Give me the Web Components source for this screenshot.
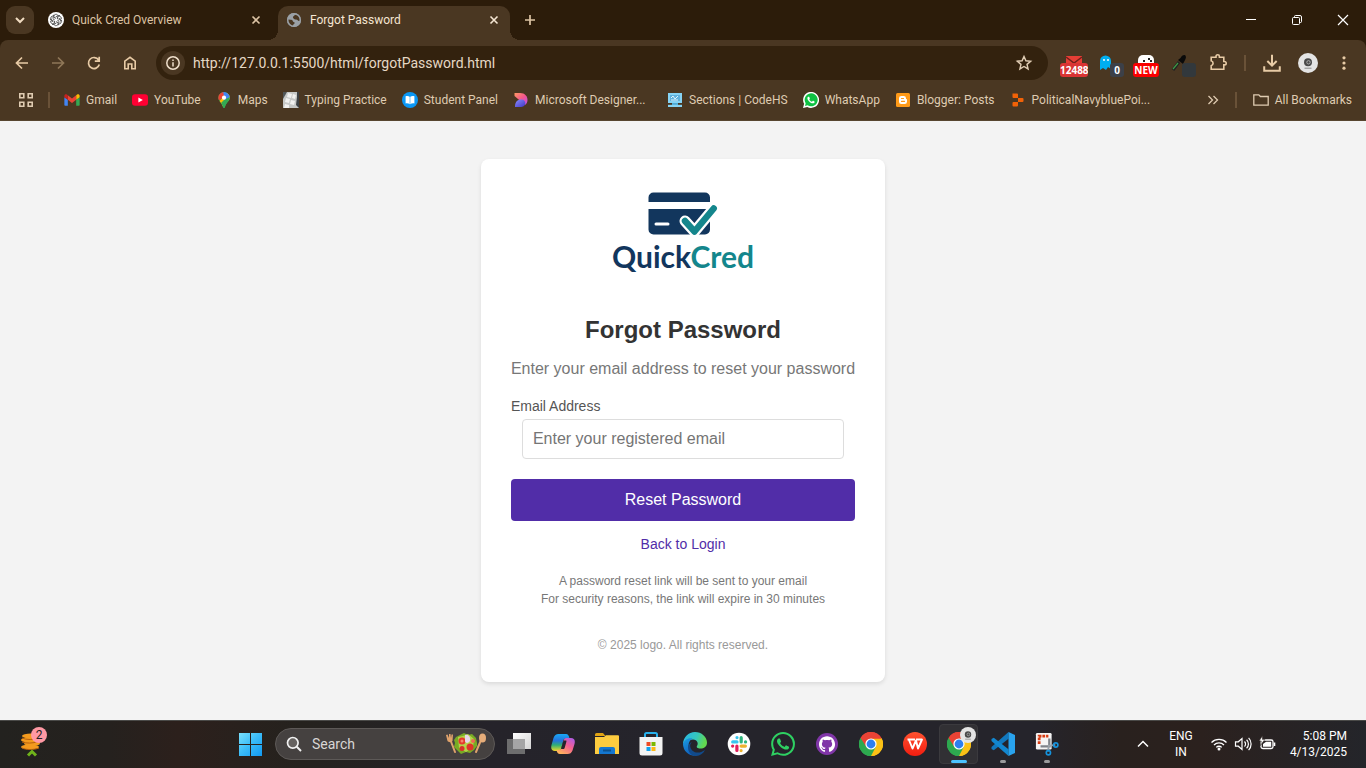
<!DOCTYPE html>
<html lang="en">
<head>
<meta charset="utf-8">
<title>Forgot Password</title>
<style>
html, body { margin: 0; height: 100%; }
body { font-family: Roboto, "Open Sans", sans-serif; font-size: 12px; }
</style>
</head>
<body>
<desktop-screen></desktop-screen>
<script>
const WHATSAPP = "M17.472 14.382c-.297-.149-1.758-.867-2.03-.967-.273-.099-.471-.148-.67.15-.197.297-.767.966-.94 1.164-.173.199-.347.223-.644.075-.297-.15-1.255-.463-2.39-1.475-.883-.788-1.48-1.761-1.653-2.059-.173-.297-.018-.458.13-.606.134-.133.298-.347.446-.52.149-.174.198-.298.298-.497.099-.198.05-.371-.025-.52-.075-.149-.669-1.612-.916-2.207-.242-.579-.487-.5-.669-.51-.173-.008-.371-.01-.57-.01-.198 0-.52.074-.792.372-.272.297-1.04 1.016-1.04 2.479 0 1.462 1.065 2.875 1.213 3.074.149.198 2.096 3.2 5.077 4.487.709.306 1.262.489 1.694.625.712.227 1.36.195 1.871.118.571-.085 1.758-.719 2.006-1.413.248-.694.248-1.289.173-1.413-.074-.124-.272-.198-.57-.347m-5.421 7.403h-.004a9.87 9.87 0 01-5.031-1.378l-.361-.214-3.741.982.998-3.648-.235-.374a9.86 9.86 0 01-1.51-5.26c.001-5.45 4.436-9.884 9.888-9.884 2.64 0 5.122 1.03 6.988 2.898a9.825 9.825 0 012.893 6.994c-.003 5.45-4.437 9.884-9.885 9.884m8.413-18.297A11.815 11.815 0 0012.05 0C5.495 0 .16 5.335.157 11.892c0 2.096.547 4.142 1.588 5.945L.057 24l6.305-1.654a11.882 11.882 0 005.683 1.448h.005c6.554 0 11.89-5.335 11.893-11.893a11.821 11.821 0 00-3.48-8.413Z";
const OCTOCAT = "M12 .297c-6.63 0-12 5.373-12 12 0 5.303 3.438 9.8 8.205 11.385.6.113.82-.258.82-.577 0-.285-.01-1.04-.015-2.04-3.338.724-4.042-1.61-4.042-1.61C4.422 18.07 3.633 17.7 3.633 17.7c-1.087-.744.084-.729.084-.729 1.205.084 1.838 1.236 1.838 1.236 1.07 1.835 2.809 1.305 3.495.998.108-.776.417-1.305.76-1.605-2.665-.3-5.466-1.332-5.466-5.93 0-1.31.465-2.38 1.235-3.22-.135-.303-.54-1.523.105-3.176 0 0 1.005-.322 3.3 1.23.96-.267 1.98-.399 3-.405 1.02.006 2.04.138 3 .405 2.28-1.552 3.285-1.23 3.285-1.23.645 1.653.24 2.873.12 3.176.765.84 1.23 1.91 1.23 3.22 0 4.61-2.805 5.625-5.475 5.92.42.36.81 1.096.81 2.22 0 1.606-.015 2.896-.015 3.286 0 .315.21.69.825.57C20.565 22.092 24 17.592 24 12.297c0-6.627-5.373-12-12-12";
const CHROME = `<path d="M12 12 1.6 6A12 12 0 0 1 22.4 6z" fill="#ea4335"/><path d="M12 12 22.4 6A12 12 0 0 1 12 24z" fill="#fbc116"/><path d="M12 12 12 24A12 12 0 0 1 1.6 6z" fill="#34a853"/><path d="M12 6.5H22.7A12 12 0 0 1 12 24L16.8 14.7z" fill="#fbc116"/><path d="M1.6 6A12 12 0 0 0 12 24L16.8 14.7 12 17.5 7.2 14.8z" fill="#2da94f"/><path d="M1.6 6A12 12 0 0 1 22.6 6.5H12L7.2 14.8z" fill="#ea4335"/><circle cx="12" cy="12" r="5.6" fill="#fff"/><circle cx="12" cy="12" r="4.4" fill="#2d7ff0"/>`;
const line = (d, w = 1.6) => `<path d="${d}" fill="none" stroke="currentColor" stroke-width="${w}"/>`;
const ROSETTE = Array.from({ length: 6 }, (_, i) => `<path d="M8 6.400L5.900 5.200V4.400a2.200 2.200 0 0 1 3.800-1.400M7.600 4.900l2.300-1.300a2.300 2.300 0 0 1 2 .1" transform="rotate(${i * 60} 8 8)" fill="none" stroke="#333" stroke-width=".8"/>`).join("");

/* name: [viewBox, markup] */
const ICONS = {
  chevron: ["0 0 16 16", line("M4 6l4 4 4-4", 2)],
  up: ["0 0 16 16", line("M3 10.500l5-5 5 5", 1.5)],
  close: ["0 0 16 16", line("M4.500 4.500l7 7M11.500 4.500l-7 7", 1.6)],
  plus: ["0 0 16 16", line("M8 3v10M3 8h10", 1.7)],
  minimize: ["0 0 16 16", line("M3 7.500h10", 1)],
  restore: ["0 0 16 16", `<rect x="3.500" y="5.500" width="7" height="7" rx="1" fill="none" stroke="currentColor"/><path d="M5.500 5.200V4.500a1 1 0 0 1 1-1h4.500a1.500 1.500 0 0 1 1.500 1.500v4.500a1 1 0 0 1-1 1h-.700" fill="none" stroke="currentColor"/>`],
  quit: ["0 0 16 16", line("M3 3l10 10M13 3L3 13", 1.2)],
  openai: ["0 0 16 16", `<circle cx="8" cy="8" r="8" fill="#fff"/>${ROSETTE}`],
  globe: ["0 0 16 16", `<circle cx="8" cy="8" r="7" fill="#9aa0a6"/><path d="M1.500 7.500c2 .2 3.500 0 4.500.5 1 .6.500 1.500 1.500 2 1 .2 1.500.5 1 1.500-.8.600-1.500 1-1.500 2.500C4 14 1.500 11 1.500 7.500zM7 4.500c1-.3 1.500-.5 1.500-1.500l2-.8A6.500 6.500 0 0 1 14.500 8c-.5 1-1.500 1-2.500.8-.5-1-1.500-1-2.500-1.200C8 7.500 6.500 6 7 4.500z" fill="#4a3722"/><circle cx="8" cy="8" r="6.300" fill="none" stroke="#9aa0a6" stroke-width="1.500"/>`],
  back: ["0 0 16 16", line("M14 8H3M8 2.500L2.500 8 8 13.500", 1.7)],
  forward: ["0 0 16 16", line("M2 8h11M8 2.500L13.500 8 8 13.500", 1.7)],
  reload: ["0 0 16 16", line("M13.300 9.500A5.500 5.500 0 1 1 12.600 5M13.200 1.800v4.400H8.800", 1.7)],
  home: ["0 0 16 16", line("M2.800 13.700V6.200L8 2.300l5.200 3.900v7.500H9.800V9H6.200v4.700z", 1.6)],
  info: ["0 0 16 16", `<circle cx="8" cy="8" r="6.200" fill="none" stroke="currentColor" stroke-width="1.500"/>${line("M8 7.200V11.500M8 4.500V6", 1.5)}`],
  star: ["0 0 16 16", line("M8 2.200l1.700 3.800 4.200.4-3.200 2.800.9 4.100L8 11.100l-3.600 2.200.9-4.100-3.200-2.800 4.200-.4z", 1.3)],
  mail: ["0 0 28 24", `<path d="M6 3h16v9H6z" fill="#e53e35"/><path d="M6 4l8 6 8-6" stroke="#6d211b" stroke-width="1.500" fill="none"/>`],
  ghost: ["0 0 28 24", `<path d="M4 17V8a5.500 5.500 0 0 1 11 0v8l-3-2-2 3-3-2z" fill="#00aef0"/><circle cx="8" cy="7" r="1" fill="#fff"/><circle cx="12" cy="7" r="1" fill="#fff"/>`],
  dice: ["0 0 28 24", `<rect x="6" y="2" width="16" height="16" rx="5" fill="#fff"/><path d="M11 7h2v2h-2zM16 5h2v2h-2zM18 7h2v2h-2z" fill="#222"/>`],
  dropper: ["0 0 28 24", `<path d="M5 17L11 9" stroke="#222" stroke-width="3"/><path d="M5 16l5-6" stroke="#3f9b46" stroke-width="1.200"/><path d="M10 7l5 4 1.500-3 1-2c1-2 0-4-1-4-2 0-3 1-4 3z" fill="#0a0a0a"/>`],
  puzzle: ["0 0 20 20", line("M3.200 4.200H8V3.500a1.700 1.700 0 0 1 3.400 0v.7h4.400V8.500h.7a1.700 1.700 0 0 1 0 3.400h-.7v4.300H3.200V12.800a2.600 2.600 0 0 0 0-5z", 1.6)],
  download: ["0 0 18 18", line("M9 1.500v9.500M4.800 7.200L9 11.400l4.200-4.200M2 12v4h14v-4", 1.8)],
  person: ["0 0 20 20", `<circle cx="10" cy="10" r="10" fill="#e4e4e4"/><circle cx="10" cy="9.300" r="4" fill="#494949"/><circle cx="10.500" cy="9.300" r="1.700" fill="none" stroke="#aaa"/><path d="M6.500 15.200h7" stroke="#888"/>`],
  menu: ["0 0 16 16", `<g fill="currentColor"><circle cx="8" cy="2.800" r="1.600"/><circle cx="8" cy="8" r="1.600"/><circle cx="8" cy="13.200" r="1.600"/></g>`],
  apps: ["0 0 16 16", `<g fill="none" stroke="currentColor" stroke-width="1.600"><path d="M1.800 1.800h4v4h-4zM10.200 1.800h4v4h-4zM1.800 10.200h4v4h-4zM10.200 10.200h4v4h-4z"/></g>`],
  gmail: ["50 37 92 76", `<path fill="#4285f4" d="M58 108h14V74L52 59v43c0 3.320 2.690 6 6 6"/><path fill="#34a853" d="M120 108h14c3.320 0 6-2.690 6-6V59l-20 15"/><path fill="#fbbc04" d="M120 48v26l20-15v-8c0-7.420-8.470-11.650-14.400-7.200"/><path fill="#ea4335" d="M72 74V48l24 18 24-18v26L96 92"/><path fill="#c5221f" d="M52 51v8l20 15V48l-5.600-4.200c-5.940-4.450-14.400-.220-14.400 7.200"/>`],
  youtube: ["0 0 16 16", `<rect y="2.300" width="16" height="11.400" rx="3" fill="#ff0033"/><path d="M6.400 5.500v5L10.800 8z" fill="#fff"/>`],
  maps: ["0 0 16 16", `<clipPath id="p"><path d="M8 0a5.700 5.700 0 0 1 5.700 5.700c0 3.500-3.700 4.700-4.700 9.300-.2 1.300-1.800 1.300-2 0C6 10.400 2.300 9.200 2.300 5.700A5.700 5.700 0 0 1 8 0z"/></clipPath><g clip-path="url(#p)"><path d="M0 0h16v16H0z" fill="#34a853"/><path d="M0 13L14 -3 16 5 5 16z" fill="#fbbc04"/><path d="M8 8L16 0v16H4l0-4z" fill="#34a853"/><path d="M6-1L16 -1V4L8 8z" fill="#4285f4"/><path d="M0-2h7L8 5 2 9z" fill="#ea4335"/></g><circle cx="8" cy="5.700" r="2.100" fill="#fff"/>`],
  keys: ["0 0 16 16", `<path d="M0 0h16v16H0z" fill="#c6c8c7"/><path d="M14 0h2v16l-3-3 1-8z" fill="#3d4144"/><g fill="#f1f1f0"><path d="M5 1l4 1-1 4-4-1zM10 2l3 1-1 4-3-1zM3 6l4 1-1 4-4-1zM8 8l4 1-1 4-4-1zM2 12l4 1v3H1z"/></g><path d="M0 0h4L0 7z" fill="#505557"/>`],
  book: ["0 0 16 16", `<circle cx="8" cy="8" r="8" fill="#0a97f5"/><path d="M3.600 4.300c1.500-.5 3-.3 4.400.6 1.400-.9 2.900-1.100 4.400-.6v7.200c-1.500-.3-3-.1-4.400.8-1.400-.9-2.900-1.100-4.400-.8z" fill="#fff"/><path d="M8 5v7" stroke="#78c5f8"/>`],
  designer: ["0 0 16 16", `<linearGradient id="a" x2="1" y2="1"><stop stop-color="#ff9a62"/><stop offset=".5" stop-color="#f4568b"/><stop offset="1" stop-color="#b74df0"/></linearGradient><linearGradient id="b" x2="1" y2="1"><stop stop-color="#8b8cff"/><stop offset="1" stop-color="#3f36c4"/></linearGradient><path d="M1.500 1H7c5 0 7.500 3.500 7.500 7 0 2-1 4-2.500 5L1.500 4z" fill="url(#a)"/><path d="M2 14.500C2 10 4.500 7.500 8 7.500c3 0 5 2 4 5-.5 1.500-2 2.500-4 2.500H2z" fill="url(#b)"/>`],
  computer: ["0 0 16 16", `<path d="M1 1h14v10H1z" fill="#86d3f4"/><path d="M3 3h10v6H3z" fill="#5fb0dc"/><path d="M4 6l2-2 2 3 3-3M4 8h7" stroke="#dff4fd" fill="none"/><path d="M5 11h6v2H5z" fill="#4caad8"/><path d="M1 12.800h14V15H1z" fill="#86d3f4"/>`],
  whatsapp: ["0 0 24 24", `<path d="${WHATSAPP}" fill="#2ed162"/>`],
  whatsappFull: ["0 0 24 24", `<path d="M0 24l1.700-6.200A12 12 0 1 1 6.400 22.400z" fill="#fff"/><path d="M3 21l1-4A9.800 9.800 0 1 1 7 20z" fill="#0fc143"/><g transform="translate(12 12) scale(.9) translate(-12 -12)"><path d="${WHATSAPP.split("m-5.421")[0]}" fill="#fff"/></g>`],
  blogger: ["0 0 16 16", `<rect x="1" y="1" width="14" height="14" rx="1.500" fill="#ff9a18"/><path d="M6.300 4h2.400A2.300 2.300 0 0 1 11 6.300c0 .8.300.9 1 1v2.400a2.300 2.300 0 0 1-2.300 2.300H6.300A2.300 2.300 0 0 1 4 9.700V6.300A2.300 2.300 0 0 1 6.300 4z" fill="#fff"/><path d="M6.500 6.500H8.500M6.500 9.400h3" stroke="#ff9a18" stroke-width="1.200" stroke-linecap="round"/>`],
  replit: ["0 0 16 16", `<path d="M2.500 1.500H7a1 1 0 0 1 1 1V6H3.500a1 1 0 0 1-1-1zM8 6h4.500a1 1 0 0 1 1 1V9a1 1 0 0 1-1 1H8zM3.500 10H8v3.500a1 1 0 0 1-1 1H3.500a1 1 0 0 1-1-1V11a1 1 0 0 1 1-1z" fill="#f26207"/>`],
  more: ["0 0 12 12", line("M1.500 2l4 4-4 4M6.500 2l4 4-4 4", 1.3)],
  folder: ["0 0 16 16", line("M.8 2.800h5l1.600 1.700h7.800v8.700H.8z", 1.3)],
  coins: ["0 0 28 28", `<g fill="#f39a1e"><ellipse cx="12" cy="7" rx="9" ry="2.500"/><ellipse cx="10" cy="11" rx="8" ry="2.500"/><ellipse cx="13" cy="14.500" rx="8" ry="2.500"/><ellipse cx="11" cy="18" rx="9" ry="2.500"/></g><path d="M3 9c4 2 12 2 17 0M3 13c4 1.500 11 1.500 16-.500M3 19c4 2 12 2 17 0" stroke="#b7600d" fill="none"/><path d="M9 26.500L13 22.500l4 4" fill="none" stroke="#6fb31b" stroke-width="3"/>`],
  windows: ["0 0 24 24", `<linearGradient id="w" gradientUnits="userSpaceOnUse" x1="0" y1="0" x2="24" y2="24"><stop stop-color="#7fe3fc"/><stop offset=".5" stop-color="#3bbcf8"/><stop offset="1" stop-color="#1199f2"/></linearGradient><path d="M1 1h11v11H1zM13 1h11v11H13zM1 13h11v11H1zM13 13h11v11H13z" fill="url(#w)"/>`],
  search: ["0 0 16 16", `<circle cx="6.800" cy="6.800" r="5.300" fill="#65615f" stroke="#f1f1f1" stroke-width="1.700"/><path d="M10.800 10.800L15 15" stroke="#f1f1f1" stroke-width="2"/>`],
  salad: ["0 0 40 22", `<g stroke="#e0a36c" stroke-width="2" stroke-linecap="round" fill="none"><path d="M4 6L9 19M35.500 6L30 19"/></g><path d="M0 2l1.500 6c1 1.500 4 1.500 5 0L7 1.500l-1.500 0L5 5 4.500 1H3v4L1.500 1.500z" fill="#e0a36c"/><ellipse cx="36.500" cy="5" rx="3.500" ry="4.500" fill="#e6ad79"/><path d="M10 4l4-2 4-2 4 2 4-1 4 4 1 5 0 3-3 4-4 3-4-1-5 2-4-4-3-3 1-4-1-3z" fill="#78ab24"/><path d="M12 4l5-1 5-2 6 5-1 8-7 5-7-4z" fill="#b4d34a"/><circle cx="16" cy="8" r="3.500" fill="#e43a2d"/><circle cx="16" cy="8" r="1.500" fill="#f5866c"/><circle cx="24" cy="14" r="3.500" fill="#df3529"/><circle cx="27" cy="8" r="2" fill="#f06a50"/><circle cx="16" cy="15.500" r="2.500" fill="#d9302a"/><path d="M19 2c3-1 6 2 5 6-2 3-5 2-5 0z" fill="#e7d6e9"/>`],
  taskview: ["0 0 24 24", `<linearGradient id="t" x2="1" y2="1"><stop stop-color="#fff"/><stop offset="1" stop-color="#d4d4d4"/></linearGradient><path d="M6 1h18v16H6z" fill="url(#t)"/><path d="M0 7h18v15H0z" fill="#6d6d6e"/><path d="M6 7h12v10H6z" fill="#a5a5a6"/>`],
  copilot: ["0 0 24 24", `<linearGradient id="c" x2="0" y2="1"><stop stop-color="#18a8f5"/><stop offset=".4" stop-color="#2672dc"/><stop offset=".65" stop-color="#2fae75"/><stop offset="1" stop-color="#f2d928"/></linearGradient><linearGradient id="d" x1="1" y1="0" x2=".3" y2="1"><stop stop-color="#a35bf0"/><stop offset=".5" stop-color="#f45f91"/><stop offset="1" stop-color="#ffb25c"/></linearGradient><path d="M7.500 2H15c2 0 3 1.500 3.500 4.500H15c-2 0-2.500 1-3 3l-1.500 6c-.6 2.500-1.500 3.500-4 3.500H4c-3 0-4.500-2-3.500-6l2-7C3.500 3.500 5 2 7.500 2z" fill="url(#c)"/><path d="M16.500 22H9c-2 0-3-1.500-3.500-4h2c2 0 3-1 3.500-3l1.500-6c.6-2.500 1.500-3 4-3H20c3 0 4.500 2 3.500 6l-2 6.500c-1 2.500-2.500 3.500-5 3.500z" fill="url(#d)"/><path d="M12.500 8.500h2.200c1 0 .8.700.6 1.500l-1.500 5.500c-.3 1-.8 1.500-1.800 1.500H10z" fill="#25242b"/>`],
  explorer: ["0 0 24 24", `<path d="M0 2.500A1.500 1.500 0 0 1 1.500 1H8l2.500 3H0z" fill="#e0a313"/><path d="M0 5h9l2-1.800h12a1 1 0 0 1 1 1V22H0z" fill="#fdcc3f"/><path d="M4 22v-5a2 2 0 0 1 2-2h12a2 2 0 0 1 2 2v5z" fill="#1477d1"/><path d="M8 18.500h8" stroke="#0c5290" stroke-width="2"/>`],
  store: ["0 0 24 24", `<path d="M6 6V2.500A1.500 1.500 0 0 1 7.500 1h9A1.500 1.500 0 0 1 18 2.500V6" stroke="#28b1ec" stroke-width="2" fill="none"/><path d="M.5 5h23v16a2.500 2.500 0 0 1-2.500 2.500H3A2.500 2.500 0 0 1 .5 21z" fill="#f3f3f3"/><path d="M7.500 10h4v4h-4z" fill="#ee4b24"/><path d="M12.500 10h4v4h-4z" fill="#7bb800"/><path d="M7.500 15h4v4h-4z" fill="#10a1ed"/><path d="M12.500 15h4v4h-4z" fill="#fdb813"/>`],
  edge: ["0 0 24 24", `<linearGradient id="e" x2="1" y2=".3"><stop stop-color="#27b5e9"/><stop offset=".6" stop-color="#35c7bc"/><stop offset="1" stop-color="#62d84f"/></linearGradient><linearGradient id="f" x2=".4" y2="1"><stop stop-color="#1b9ce2"/><stop offset="1" stop-color="#1060bc"/></linearGradient><path d="M0 12C.2 5 5.500 0 12 0s12 5 12 10.500c0 4-3 6-6.500 6-3 0-4.500-1.500-3.500-2.600 1.700-2 .5-6.400-4-6.400-5 0-8.500 3-10 4.500z" fill="url(#e)"/><path d="M0 12c1-4 5-6.500 9.500-5.500C7 8 5.500 10.500 5.500 14c0 4.500 3.200 8.500 7 9.900A12 12 0 0 1 0 12z" fill="url(#f)"/><path d="M9 10c-2.500 2-2.500 6 .5 8.700 3.500 2.800 8 2.300 12.500-.7-2 4-6 6.300-10 6-5-1-8-6-6.500-10C6 12 7.500 10.500 9 10z" fill="#114a8b"/>`],
  slack: ["0 0 24 24", `<circle cx="12" cy="12" r="11.300" fill="#fff"/><g stroke-width="3.200" stroke-linecap="round"><path d="M5.700 9.900H10M10 5.500v.1" stroke="#36c5f0"/><path d="M14.200 5.700V9.900M18.500 9.900h.1" stroke="#2eb67d"/><path d="M14.100 14.100h4.300M14.100 18.500v.1" stroke="#ecb22e"/><path d="M9.900 14.100v4.300M5.600 14.100h.1" stroke="#e01e5a"/></g>`],
  github: ["0 0 24 24", `<circle cx="12" cy="12" r="11" fill="#8036a8"/><g transform="translate(4 4) scale(.67)"><path d="${OCTOCAT}" fill="#fff"/></g>`],
  chrome: ["0 0 24 24", CHROME],
  wps: ["0 0 24 24", `<linearGradient id="g" x2="0" y2="1"><stop stop-color="#ff5230"/><stop offset="1" stop-color="#f31d10"/></linearGradient><circle cx="12" cy="12" r="12" fill="url(#g)"/><path d="M4.500 7.500h7.500M6 8l3.500 8.500L13 8.500l2 8L19 7.500h-6" fill="none" stroke="#fff" stroke-width="1.900" stroke-linejoin="round"/>`],
  vscode: ["0 0 24 24", `<path d="M17.500 0v6.800L2.800 18.200.5 17V15z" fill="#1178be"/><path d="M17.500 24v-6.800L2.800 5.800.5 7V9z" fill="#1287d0"/><path d="M17.500 0L24 3v18l-6.500 3z" fill="#29a3ee"/>`],
  snip: ["0 0 26 26", `<rect x="1" y="1" width="17" height="18" rx="1.500" fill="#f5f5f5"/><path d="M4.500 13V4.500h10" fill="none" stroke="#d83b12" stroke-width="3" stroke-dasharray="3 1"/><path d="M15.500 7v9.500M6 15.500h11" stroke="#80848a" stroke-width="2.500"/><path d="M14 15l8-1M15 15l-1 6" stroke="#9aa1a8" stroke-width="2"/><circle cx="22.500" cy="14" r="2.300" fill="none" stroke="#1592dc" stroke-width="1.800"/><circle cx="14.500" cy="22.500" r="2.300" fill="none" stroke="#1592dc" stroke-width="1.800"/>`],
  wifi: ["0 0 18 18", `<g fill="none" stroke="currentColor" stroke-width="1.300"><path d="M1.500 7.500a10.600 10.600 0 0 1 15 0M4 10a7.100 7.100 0 0 1 10 0M6.300 12.400a3.800 3.800 0 0 1 5.400 0"/></g><circle cx="9" cy="14" r="1.500" fill="currentColor"/>`],
  sound: ["0 0 18 18", line("M1.500 6.800h2.800L8 3.500v11L4.300 11.200H1.500zM10.500 6.500a3.500 3.500 0 0 1 0 5M12.600 4.700a6 6 0 0 1 0 8.600M14.600 2.900a8.700 8.700 0 0 1 0 12.200", 1.2)],
  battery: ["0 0 18 18", `<rect x="3" y="5" width="12" height="8.500" rx="1.800" fill="none" stroke="currentColor" stroke-width="1.300"/><path d="M5 11.700V9L8 6.800h5.200v4.900z" fill="currentColor"/><path d="M16.500 7.500v3.500" stroke="currentColor" stroke-width="1.600"/><path d="M4.500.8L1 6h2.200L2.500 10.500 6.800 4.500H4.500z" fill="currentColor" stroke="#2a211e" stroke-width=".6"/>`]
};

const define = (name, html) => customElements.define(name, class extends HTMLElement {
  connectedCallback() {
    if (this.shadowRoot) return;
    const t = document.createElement("template");
    t.innerHTML = typeof html === "function" ? html(this) : html;
    this.attachShadow({ mode: "open" }).append(t.content.cloneNode(true));
  }
});

define("ui-icon", el => {
  const [box, art] = ICONS[el.getAttribute("name")];
  return `<style>:host{display:block;flex:none;width:16px;height:16px}svg{display:block;width:100%;height:100%}</style>
  <svg viewBox="${box}" aria-hidden="true">${art}</svg>`;
});

define("icon-button", el => `<style>
  :host{display:block;flex:none;width:36px;height:34px}
  button{all:unset;display:grid;place-items:center;width:100%;height:100%}
  ui-icon{width:var(--icon,16px);height:var(--icon,16px)}
  </style><button aria-label="${el.getAttribute("label")}"><ui-icon name="${el.getAttribute("icon")}"></ui-icon></button>`);

define("browser-tab", el => `<style>
  :host{display:flex;align-items:center;gap:8px;width:230px;height:28px;padding:0 6px 0 8px;margin:6px 0;box-sizing:border-box;color:#dcc3a4}
  :host([active]){position:relative;width:232px;height:34px;padding:0 8px 6px;margin:6px 0 0 8px;background:#4a3722;border-radius:10px 10px 0 0;color:#f5e6d3}
  :host([active])::before,:host([active])::after{content:"";position:absolute;bottom:0;width:10px;height:10px}
  :host([active])::before{left:-10px;background:radial-gradient(circle at 0 0,transparent 10px,#4a3722 10px)}
  :host([active])::after{right:-10px;background:radial-gradient(circle at 100% 0,transparent 10px,#4a3722 10px)}
  span{flex:1;white-space:nowrap}
  icon-button{width:16px;height:16px;--icon:16px}
  </style><ui-icon name="${el.getAttribute("icon")}"></ui-icon><span><slot></slot></span><icon-button icon="close" label="Close tab"></icon-button>`);

define("tab-strip", `<style>
  :host{display:flex;height:40px;background:#2c1c0a;color:#dcc3a4}
  .list{width:28px;height:28px;margin:6px;background:#4a3722;border-radius:9px;color:#f0dcc2}
  .new{width:20px;height:28px;margin:6px 10px}
  .window{display:flex;margin-left:auto;color:#fff}
  .window icon-button{width:46px;height:40px}
  </style>
  <icon-button class="list" icon="chevron" label="Search tabs"></icon-button>
  <browser-tab icon="openai">Quick Cred Overview</browser-tab>
  <browser-tab icon="globe" active>Forgot Password</browser-tab>
  <icon-button class="new" icon="plus" label="New tab"></icon-button>
  <div class="window"><icon-button icon="minimize" label="Minimize"></icon-button><icon-button icon="restore" label="Restore"></icon-button><icon-button icon="quit" label="Close"></icon-button></div>`);

define("extension-button", el => `<style>
  :host{display:block;width:36px;height:34px}
  button{all:unset;position:relative;display:block;width:36px;height:34px}
  ui-icon{width:28px;height:24px;margin:7px 4px 3px}
  span{position:absolute;top:17px;left:50%;height:14px;min-width:14px;box-sizing:border-box;border-radius:3px;font:700 10px/14px "Open Sans",sans-serif;color:#fff;text-align:center;overflow:hidden;white-space:nowrap;transform:translateX(-50%)}
  </style><button aria-label="${el.getAttribute("label")}"><ui-icon name="${el.getAttribute("icon")}"></ui-icon><span style="background:${el.getAttribute("tint")};width:${el.getAttribute("size")}px;margin-left:${el.getAttribute("shift") || 0}px"><slot></slot></span></button>`);

define("address-bar", `<style>
  :host{display:flex;align-items:center;flex:1;height:34px;border-radius:17px;background:#33220e;color:#e0cdb4;margin:0 8px}
  .site{width:24px;height:24px;margin-left:5px;border-radius:12px;background:#4a3722;color:#f0e0cc}
  input{all:unset;flex:1;min-width:0;margin-left:8px;font-size:14px;color:#e6d8c5}
  .star{width:34px;margin-right:7px;--icon:18px}
  </style><icon-button class="site" icon="info" label="View site information"></icon-button>
  <input aria-label="Address" value="http://127.0.0.1:5500/html/forgotPassword.html">
  <icon-button class="star" icon="star" label="Bookmark this tab"></icon-button>`);

define("nav-bar", `<style>
  :host{display:flex;align-items:center;padding:6px 4px 0;color:#e8cba6}
  .off{color:#8f7758}
  i{width:2px;height:16px;margin:0 8px;background:#6a5238}
  .big{--icon:20px}.me{--icon:20px}
  </style>
  <icon-button icon="back" label="Back"></icon-button><icon-button class="off" icon="forward" label="Forward"></icon-button>
  <icon-button icon="reload" label="Reload"></icon-button><icon-button icon="home" label="Home"></icon-button>
  <address-bar></address-bar>
  <extension-button icon="mail" label="Mail checker" tint="#d93434" size="28">12488</extension-button>
  <extension-button icon="ghost" label="Tracker blocker" tint="#3c4048" size="14" shift="7">0</extension-button>
  <extension-button icon="dice" label="Dice" tint="#f90000" size="26">NEW</extension-button>
  <extension-button icon="dropper" label="Colour picker" tint="#32383c" size="14" shift="7"></extension-button>
  <icon-button class="big" icon="puzzle" label="Extensions"></icon-button>
  <i></i>
  <icon-button class="big" icon="download" label="Downloads"></icon-button>
  <icon-button class="me" icon="person" label="Profile"></icon-button>
  <icon-button icon="menu" label="Menu"></icon-button>`);

define("book-mark", el => `<style>
  :host{display:block;flex:none}
  a{display:flex;align-items:center;gap:6px;color:#dfcbb1;text-decoration:none;white-space:nowrap}
  :host([long]) a{width:139px}
  </style><a href="#"><ui-icon name="${el.getAttribute("icon")}"></ui-icon><slot></slot></a>`);

define("bookmarks-bar", `<style>
  :host{display:flex;align-items:center;height:40px;padding:0 14px 0 8px;border-bottom:1px solid #57452f;color:#dfcbb1}
  nav{display:flex;gap:15px;flex:1;overflow:hidden}
  i{width:2px;height:16px;background:#6a5238}
  .apps-end{margin:0 14px 0 4px}
  .more{--icon:12px}
  .more-end{margin:0 16px 0 4px}
  </style>
  <icon-button icon="apps" label="Apps"></icon-button><i class="apps-end"></i>
  <nav>
  <book-mark icon="gmail">Gmail</book-mark><book-mark icon="youtube">YouTube</book-mark><book-mark icon="maps">Maps</book-mark>
  <book-mark icon="keys">Typing Practice</book-mark><book-mark icon="book">Student Panel</book-mark><book-mark icon="designer" long>Microsoft Designer...</book-mark>
  <book-mark icon="computer">Sections | CodeHS</book-mark><book-mark icon="whatsappFull">WhatsApp</book-mark><book-mark icon="blogger">Blogger: Posts</book-mark>
  <book-mark icon="replit" long>PoliticalNavybluePoi...</book-mark>
  </nav>
  <icon-button class="more" icon="more" label="More bookmarks"></icon-button><i class="more-end"></i>
  <book-mark icon="folder">All Bookmarks</book-mark>`);

define("browser-chrome", `<style>
  :host{display:block;background:#2c1c0a}
  .bars{background:#4a3722;border-radius:8px 8px 0 0}
  </style><tab-strip></tab-strip><div class="bars"><nav-bar></nav-bar><bookmarks-bar></bookmarks-bar></div>`);

define("brand-logo", `<style>
  :host{display:flex;flex-direction:column;align-items:center;gap:4px;padding-top:2px}
  svg{width:72px;height:46px}
  div{font:700 30px/30px Lato,sans-serif;color:#12365d}
  span{color:#14868c}
  </style><svg viewBox="0 0 72 46" role="img" aria-label="Card with tick">
  <path d="M1.500 11V6.500a5 5 0 0 1 5-5H58a5 5 0 0 1 5 5V11zM1.500 18H63V38.500a5 5 0 0 1-5 5H6.500a5 5 0 0 1-5-5z" fill="#12365d"/>
  <path d="M9 33H21" stroke="#fff" stroke-width="3" stroke-linecap="round"/>
  <path d="M38 30L47.500 40.500 66.700 17.500" fill="none" stroke="#fff" stroke-width="11" stroke-linecap="round" stroke-linejoin="round"/>
  <path d="M38 30L47.500 40.500 66.700 17.500" fill="none" stroke="#14868c" stroke-width="6.500" stroke-linecap="round" stroke-linejoin="round"/></svg>
  <div>Quick<span>Cred</span></div>`);

define("reset-card", `<style>
  :host{display:block;padding:30px;background:#fff;border-radius:8px;box-shadow:0 2px 4px rgba(0,0,0,.1);font-family:"Liberation Sans",Arial,sans-serif;text-align:center}
  h2{margin:45px 0 15px;font-size:24px;line-height:28px;color:#333}
  p{margin:0}
  .lead{font-size:16px;line-height:20px;color:#777}
  form{margin-top:19px}
  label{display:block;margin-bottom:5px;text-align:left;font-size:14px;line-height:16px;color:#555}
  input{display:block;box-sizing:border-box;width:calc(100% - 22px);height:40px;margin:0 auto 20px;padding:0 10px;border:1px solid #ddd;border-radius:4px;font:16px "Liberation Sans",Arial,sans-serif}
  input::placeholder{color:#757575}
  button{display:block;width:100%;height:42px;border:0;border-radius:4px;background:#512da8;color:#fff;font:16px "Liberation Sans",Arial,sans-serif}
  a{display:block;margin:15px 0 20px;font-size:14px;line-height:16px;color:#512da8;text-decoration:none}
  .note{font-size:12px;line-height:18px;color:#777}
  footer{margin-top:30px;font-size:12px;line-height:14px;color:#999}
  </style>
  <brand-logo></brand-logo><h2>Forgot Password</h2><p class="lead">Enter your email address to reset your password</p>
  <form><label for="email">Email Address</label><input id="email" type="email" placeholder="Enter your registered email"><button type="button">Reset Password</button></form>
  <a href="#">Back to Login</a>
  <p class="note">A password reset link will be sent to your email<br>For security reasons, the link will expire in 30 minutes</p>
  <footer>© 2025 logo. All rights reserved.</footer>`);

define("task-app", el => `<style>
  :host{display:block;position:relative;width:44px;height:48px}
  button{all:unset;display:grid;place-items:center;width:44px;height:48px}
  ui-icon{width:24px;height:24px}
  :host([open])::after{content:"";position:absolute;left:19px;bottom:5px;width:6px;height:3px;border-radius:2px;background:#9b9b9d}
  :host([current])::before{content:"";position:absolute;left:2px;top:4px;width:39px;height:40px;box-sizing:border-box;border-radius:4px;background:#313034;border:1px solid #3b3a3e}
  :host([current])::after{content:"";position:absolute;left:14px;bottom:5px;width:16px;height:3px;border-radius:2px;background:#4cc2ff}
  :host([current]) button{position:relative}
  .who{position:absolute;left:23px;top:7px;width:16px;height:16px}
  </style><button aria-label="${el.getAttribute("icon")}"><ui-icon name="${el.getAttribute("icon")}"></ui-icon>${el.hasAttribute("current") ? '<ui-icon class="who" name="person"></ui-icon>' : ""}</button>`);

define("task-search", `<style>
  :host{display:flex;align-items:center;width:220px;height:32px;box-sizing:border-box;margin:0 2px 0 3px;padding:0 8px 0 10px;border:1px solid #5d5957;border-radius:16px;background:#454140}
  input{all:unset;flex:1;min-width:0;margin-left:10px;font-size:14px;color:#fff}
  input::placeholder{color:#d8d6d5}
  .dish{width:40px;height:22px}
  </style><ui-icon name="search"></ui-icon><input aria-label="Search" placeholder="Search"><ui-icon class="dish" name="salad"></ui-icon>`);

define("task-bar", `<style>
  :host{display:grid;grid-template-columns:228px auto 1fr;height:48px;box-shadow:inset 0 1px #4a4a48;color:#fff;background:linear-gradient(90deg,#23221f 0,#25211e 8%,#2c201c 13%,#25221e 22%,#25232a 36%,#25242b 50%,#25242b 76%,#29211e 82%,#2b211e 88%,#24252a 100%)}
  .widget{position:relative;width:28px;margin-left:19px}
  .widget ui-icon{width:28px;height:28px;margin-top:9px}
  .widget b{position:absolute;left:12px;top:7px;width:16px;height:16px;border-radius:8px;background:#ff99a4;color:#222;font-size:12px;font-weight:400;line-height:16px;text-align:center}
  .apps,.tray{display:flex;align-items:center}
  .tray{justify-content:flex-end;padding-right:19px;text-align:center;line-height:16px}
  .lang{width:28px;margin:0 15px 0 16px}
  .status{display:flex;gap:6px}
  .status ui-icon{width:18px;height:18px}
  time{width:71px;text-align:right}
  </style>
  <div class="widget"><ui-icon name="coins"></ui-icon><b>2</b></div>
  <div class="apps"><task-app icon="windows"></task-app><task-search></task-search>
  ${["taskview", "copilot", "explorer", "store", "edge", "slack", "whatsapp", "github", "chrome", "wps"].map(n => `<task-app icon="${n}"></task-app>`).join("")}<task-app icon="chrome" current></task-app><task-app icon="vscode" open></task-app><task-app icon="snip" open></task-app></div>
  <div class="tray"><ui-icon name="up"></ui-icon><div class="lang">ENG<br>IN</div>
  <div class="status"><ui-icon name="wifi"></ui-icon><ui-icon name="sound"></ui-icon><ui-icon name="battery"></ui-icon></div>
  <time>5:08 PM<br>4/13/2025</time></div>`);

define("desktop-screen", `<style>
  :host{display:flex;flex-direction:column;min-height:100vh}
  main{flex:1;display:grid;place-items:center;background:#f3f3f3}
  </style><browser-chrome></browser-chrome><main><reset-card></reset-card></main><task-bar></task-bar>`);
</script>
</body>
</html>
